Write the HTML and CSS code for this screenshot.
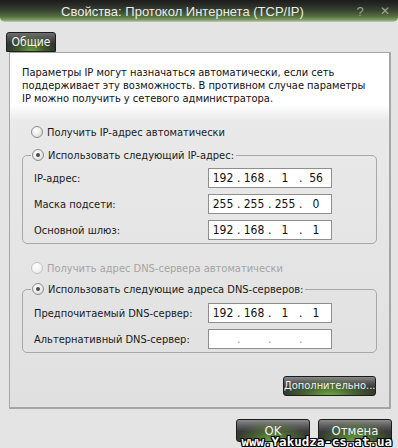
FILE: index.html
```html
<!DOCTYPE html>
<html lang="ru">
<head>
    <meta charset="UTF-8">
    <title>Свойства: Протокол Интернета (TCP/IP)</title>
    <link rel="stylesheet" href="styles.css">
</head>
<body>
    <div class="window">
        <div class="titlebar">
            <span class="title">Свойства: Протокол Интернета (TCP/IP)</span>
            <span class="tb-btn tb-help">?</span>
            <span class="tb-btn tb-close">✕</span>
        </div>

        <div class="tabs">
            <div class="tab">Общие</div>
        </div>

        <div class="page">
            <p class="intro">Параметры IP могут назначаться автоматически, если сеть<br>поддерживает эту возможность. В противном случае параметры<br>IP можно получить у сетевого администратора.</p>

            <div class="radio-line r-ip-auto"><span class="radio"></span>Получить IP-адрес автоматически</div>

            <fieldset class="group g-ip">
                <legend><span class="radio checked"></span>Использовать следующий IP-адрес:</legend>
                <div class="row">
                    <span class="lbl">IP-адрес:</span>
                    <div class="ip"><span>192</span><i>.</i><span>168</span><i>.</i><span>1</span><i>.</i><span>56</span></div>
                </div>
                <div class="row">
                    <span class="lbl">Маска подсети:</span>
                    <div class="ip"><span>255</span><i>.</i><span>255</span><i>.</i><span>255</span><i>.</i><span>0</span></div>
                </div>
                <div class="row">
                    <span class="lbl">Основной шлюз:</span>
                    <div class="ip"><span>192</span><i>.</i><span>168</span><i>.</i><span>1</span><i>.</i><span>1</span></div>
                </div>
            </fieldset>

            <div class="radio-line r-dns-auto disabled"><span class="radio"></span>Получить адрес DNS-сервера автоматически</div>

            <fieldset class="group g-dns">
                <legend><span class="radio checked"></span>Использовать следующие адреса DNS-серверов:</legend>
                <div class="row">
                    <span class="lbl">Предпочитаемый DNS-сервер:</span>
                    <div class="ip"><span>192</span><i>.</i><span>168</span><i>.</i><span>1</span><i>.</i><span>1</span></div>
                </div>
                <div class="row">
                    <span class="lbl">Альтернативный DNS-сервер:</span>
                    <div class="ip empty"><span></span><i>.</i><span></span><i>.</i><span></span><i>.</i><span></span></div>
                </div>
            </fieldset>

            <div class="adv-line">
                <div class="btn btn-adv">Дополнительно...</div>
            </div>
        </div>

        <div class="footer">
            <div class="btn btn-ok">OK</div>
            <div class="btn btn-cancel">Отмена</div>
        </div>

        <div class="watermark">www.Yakudza-cs.at.ua</div>
    </div>
</body>
</html>
```

FILE: styles.css
```css
*{ padding: 0; margin: 0; box-sizing: border-box; }

body{
    background: #e4e4e4;
    font-family: "DejaVu Sans Condensed", "Liberation Sans", sans-serif;
    font-size: 11px;
    color: #1a1a1a;
    overflow: hidden;
}

.window{
    position: relative;
    width: 398px;
    height: 448px;
    background: #e4e4e4;
    overflow: hidden;
}

/* title bar */
.titlebar{
    display: flex;
    align-items: center;
    height: 22px;
    padding-left: 61px;
    background: linear-gradient(#1c1c1c 0, #2a2d27 25%, #3b4634 50%, #56703f 75%, #7c9b5e 90%, #c4ccbc 100%);
    border-radius: 0 0 5px 5px;
}
.title{
    flex: 1;
    color: #ececec;
    font-family: "Liberation Sans", sans-serif;
    font-size: 13px;
    padding-top: 1px;
}
.tb-btn{
    color: #9aa690;
    font-family: "Liberation Sans", sans-serif;
    font-size: 13px;
    width: 22px;
    text-align: center;
}
.tb-help{ margin-right: 3px; }
.tb-close{ margin-right: 2px; font-size: 12px; }

/* tabs */
.tabs{
    padding: 10px 0 0 6px;
    height: 30px;
}
.tab{
    width: 50px;
    height: 20px;
    line-height: 18px;
    text-align: center;
    color: #f4f4f4;
    font-size: 12px;
    border: 1px solid #1e1e1e;
    border-radius: 3px 3px 0 0;
    background:
        radial-gradient(ellipse at 50% 110%, rgba(120,190,70,.85) 0, rgba(90,140,50,.4) 40%, rgba(0,0,0,0) 70%),
        linear-gradient(#6e6e6e 0, #4a4a4a 35%, #333 60%, #2e3a28 100%);
}

/* page */
.page{
    margin: 0 7px 0 9px;
    height: 357px;
    border: 1px solid #a6a6a6;
    border-width: 1px 2px 2px 1px;
    background: linear-gradient(#fff 0, #fff 52px, #e9e9e9 68px, #e0e0e0 100%);
    padding: 0 12px 0 12px;
}

.intro{
    padding-top: 13px;
    line-height: 13px;
    white-space: nowrap;
    color: #111;
}

.radio-line{
    display: flex;
    align-items: center;
    height: 14px;
    padding-left: 9px;
}
.r-ip-auto{ margin-top: 20px; }
.r-dns-auto{ margin-top: 17px; }
.disabled{ color: #a4a4a4; }

.radio{
    display: inline-block;
    width: 12px;
    height: 12px;
    margin-right: 4px;
    border: 1px solid #8c8c8c;
    border-radius: 50%;
    background: radial-gradient(circle at 40% 35%, #fff 0, #f0f0f0 40%, #cfcfcf 100%);
    position: relative;
}
.disabled .radio{
    border-color: #c4c4c4;
    background: radial-gradient(circle at 40% 35%, #fff 0, #f4f4f4 50%, #e0e0e0 100%);
}
.radio.checked::after{
    content: "";
    position: absolute;
    left: 3px;
    top: 3px;
    width: 4px;
    height: 4px;
    border-radius: 50%;
    background: #4a4a4a;
}

/* group boxes */
.group{
    border: 1px solid #a8a8a8;
    border-radius: 5px;
    padding: 0 0 0 11px;
    min-width: 0;
}
.group legend{
    display: flex;
    align-items: center;
    height: 14px;
    margin-left: -3px;
    padding: 0 2px 0 1px;
}
.g-ip{ margin-top: 9px; padding-bottom: 3px; }
.g-dns{ margin-top: 7px; padding-bottom: 3px; }

.row{
    display: flex;
    align-items: center;
    height: 20px;
    margin-top: 6px;
    padding-right: 44px;
}
.g-ip .row:first-of-type{ margin-top: 6px; }
.g-dns .row:first-of-type{ margin-top: 7px; }
.lbl{ flex: 1; }

.ip{
    display: grid;
    grid-template-columns: 28px 3px 28px 3px 28px 3px 28px;
    align-items: center;
    width: 124px;
    height: 20px;
    border: 1px solid #8e8e8e;
    background: #fff;
    color: #111;
    font-size: 12px;
}
.ip span{ text-align: center; }
.ip i{ font-style: normal; text-align: center; }
.ip.empty i{ color: #9a9a9a; }

/* buttons */
.btn{
    height: 20px;
    line-height: 18px;
    text-align: center;
    color: #f2f2f2;
    font-size: 11px;
    white-space: nowrap;
    border: 1px solid #1c1c1c;
    border-radius: 3px;
    background:
        radial-gradient(ellipse at 50% 115%, rgba(125,200,70,.9) 0, rgba(95,150,55,.45) 40%, rgba(0,0,0,0) 72%),
        linear-gradient(#8a8a8a 0, #5a5a5a 30%, #3a3a3a 55%, #2f3a29 100%);
}
.adv-line{
    display: flex;
    justify-content: flex-end;
    margin-top: 23px;
    padding-right: 1px;
}
.btn-adv{ width: 93px; }

.footer{
    display: flex;
    justify-content: flex-end;
    gap: 8px;
    padding: 10px 6px 0 0;
}
.btn-ok,
.btn-cancel{
    width: 74px;
    height: 23px;
    line-height: 21px;
    font-size: 13px;
}

/* overlay watermark */
.watermark{
    position: absolute;
    right: 6px;
    bottom: 0;
    font-family: "DejaVu Sans Mono", monospace;
    font-weight: bold;
    font-size: 12.5px;
    line-height: 12px;
    color: #fff;
    text-shadow: -1px -1px 0 #000, 1px -1px 0 #000, -1px 1px 0 #000, 1px 1px 0 #000, 0 1px 0 #000, 0 -1px 0 #000, 1px 0 0 #000, -1px 0 0 #000;
}
```
